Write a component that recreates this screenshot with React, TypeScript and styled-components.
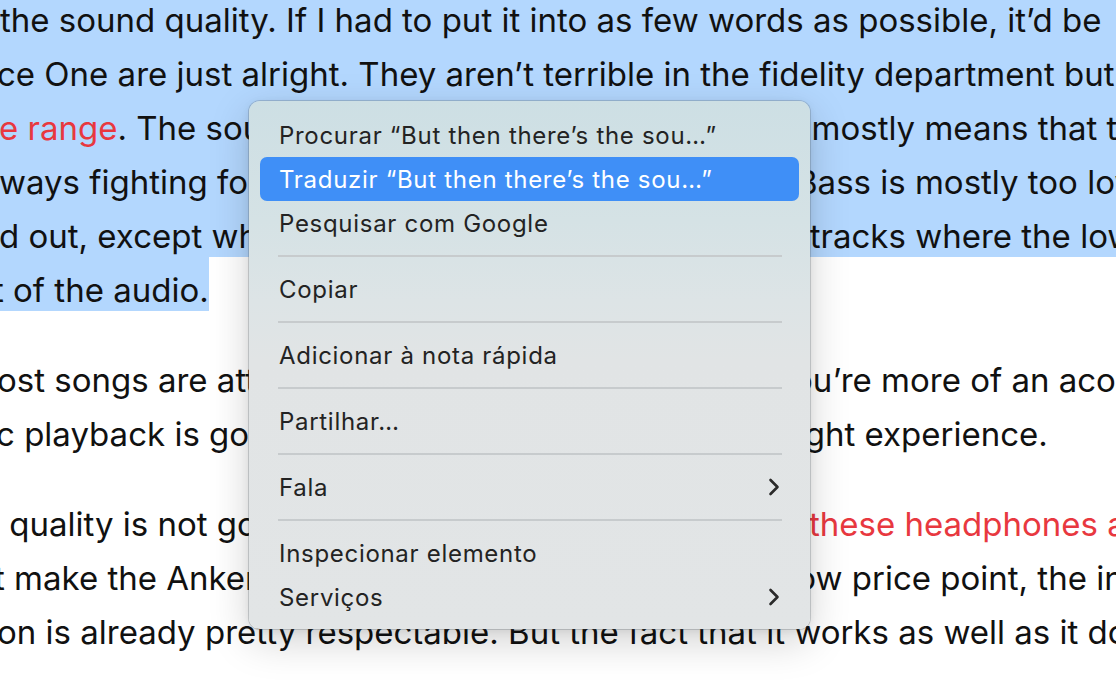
import styled, { createGlobalStyle } from 'styled-components'

const GlobalStyle = createGlobalStyle`
  html, body {
    margin: 0;
    padding: 0;
    background: #fff;
    overflow: hidden;
  }
`

const Page = styled.div`
  position: relative;
  width: 1116px;
  height: 684px;
  overflow: hidden;
  background: #fff;
  font-family: Inter, 'Liberation Sans', sans-serif;
`

const Article = styled.div`
  margin-top: -13px;
  color: #111;
  font-size: 33px;
`

const Para = styled.div`
  & + & {
    margin-top: 36px;
  }
`

const Row = styled.div<{ $selected?: boolean; $indent?: number }>`
  display: flex;
  height: 54px;
  line-height: 66px;
  white-space: pre;
  overflow: hidden;
  margin-left: ${(p) => p.$indent ?? 0}px;
  background: ${(p) => (p.$selected ? '#b3d7fe' : 'transparent')};
`

const Sel = styled.span`
  background: #b3d7fe;
`

const Link = styled.span`
  color: #e8383f;
`

const Menu = styled.div`
  position: absolute;
  left: 249px;
  top: 101px;
  width: 561px;
  box-sizing: border-box;
  padding: 12px 11px 10px;
  border-radius: 11px;
  background: linear-gradient(
    to bottom,
    #cddfe4 0px,
    #d5e2e5 120px,
    #dde4e6 200px,
    #e1e4e5 260px,
    #e2e5e6 100%
  );
  box-shadow: 0 0 0 1px rgba(80, 90, 100, 0.25), 0 12px 40px rgba(0, 0, 0, 0.18),
    0 2px 8px rgba(0, 0, 0, 0.08);
  font-size: 24px;
  letter-spacing: 0.7px;
`

const Item = styled.div<{ $active?: boolean }>`
  display: flex;
  align-items: center;
  justify-content: space-between;
  height: 44px;
  padding: 0 19px 0 19px;
  border-radius: 7px;
  white-space: pre;
  color: ${(p) => (p.$active ? '#fff' : '#232323')};
  background: ${(p) => (p.$active ? '#3f8ff7' : 'transparent')};
`

const Separator = styled.div`
  height: 22px;
  display: flex;
  align-items: center;
  padding: 0 17px 0 18px;

  &::after {
    content: '';
    flex: 1;
    height: 2px;
    background: #c7cbcd;
  }
`

const Chevron = () => (
  <svg width="12" height="18" viewBox="0 0 12 18">
    <path
      d="M2.5 2 L9.5 9 L2.5 16"
      fill="none"
      stroke="#2a2a2a"
      strokeWidth="2.6"
      strokeLinecap="round"
      strokeLinejoin="round"
    />
  </svg>
)

type Entry = { label: string; active?: boolean; sub?: boolean } | 'sep'

const entries: Entry[] = [
  { label: 'Procurar “But then there’s the sou…”' },
  { label: 'Traduzir “But then there’s the sou…”', active: true },
  { label: 'Pesquisar com Google' },
  'sep',
  { label: 'Copiar' },
  'sep',
  { label: 'Adicionar à nota rápida' },
  'sep',
  { label: 'Partilhar…' },
  'sep',
  { label: 'Fala', sub: true },
  'sep',
  { label: 'Inspecionar elemento' },
  { label: 'Serviços', sub: true },
]

export default function App() {
  return (
    <Page>
      <GlobalStyle />
      <Article>
        <Para>
          <Row $selected $indent={0}>
            {'the sound quality. If I had to put it into as few words as possible, it’d be'}
          </Row>
          <Row $selected $indent={-3}>
            {'ce One are just alright. They aren’t terrible in the fidelity department but'}
          </Row>
          <Row $selected $indent={-1}>
            <Link>e range</Link>
            {'. The sound is bass-heavy and thick,  which mostly means that the'}
          </Row>
          <Row $selected $indent={-1}>
            {'ways fighting for attention with the lows and mids.\u2009 Bass is mostly too low'}
          </Row>
          <Row $selected $indent={-1}>
            {'d out, except when you listen to some bass-heavy   tracks where the low'}
          </Row>
          <Row $indent={-7}>
            <Sel>t of the audio.</Sel>
          </Row>
        </Para>
        <Para>
          <Row $indent={-3}>
            {'ost songs are attention-grabbing enough — but if you’re more of an acoustic'}
          </Row>
          <Row $indent={-4}>
            {'c playback is going to be a less than stellar, only alright experience.'}
          </Row>
        </Para>
        <Para>
          <Row $indent={0}>
            {' quality is not good, but it is fine for the price, plus   '}
            <Link>these headphones are</Link>
          </Row>
          <Row $indent={-6}>
            {'t make the Anker Space One a steal, but at such a  low price point, the in'}
          </Row>
          <Row $indent={-3}>
            {'on is already pretty respectable. But the fact that it works as well as it does'}
          </Row>
        </Para>
      </Article>

      <Menu>
        {entries.map((e, i) =>
          e === 'sep' ? (
            <Separator key={i} />
          ) : (
            <Item key={i} $active={e.active}>
              <span>{e.label}</span>
              {e.sub && <Chevron />}
            </Item>
          )
        )}
      </Menu>
    </Page>
  )
}
